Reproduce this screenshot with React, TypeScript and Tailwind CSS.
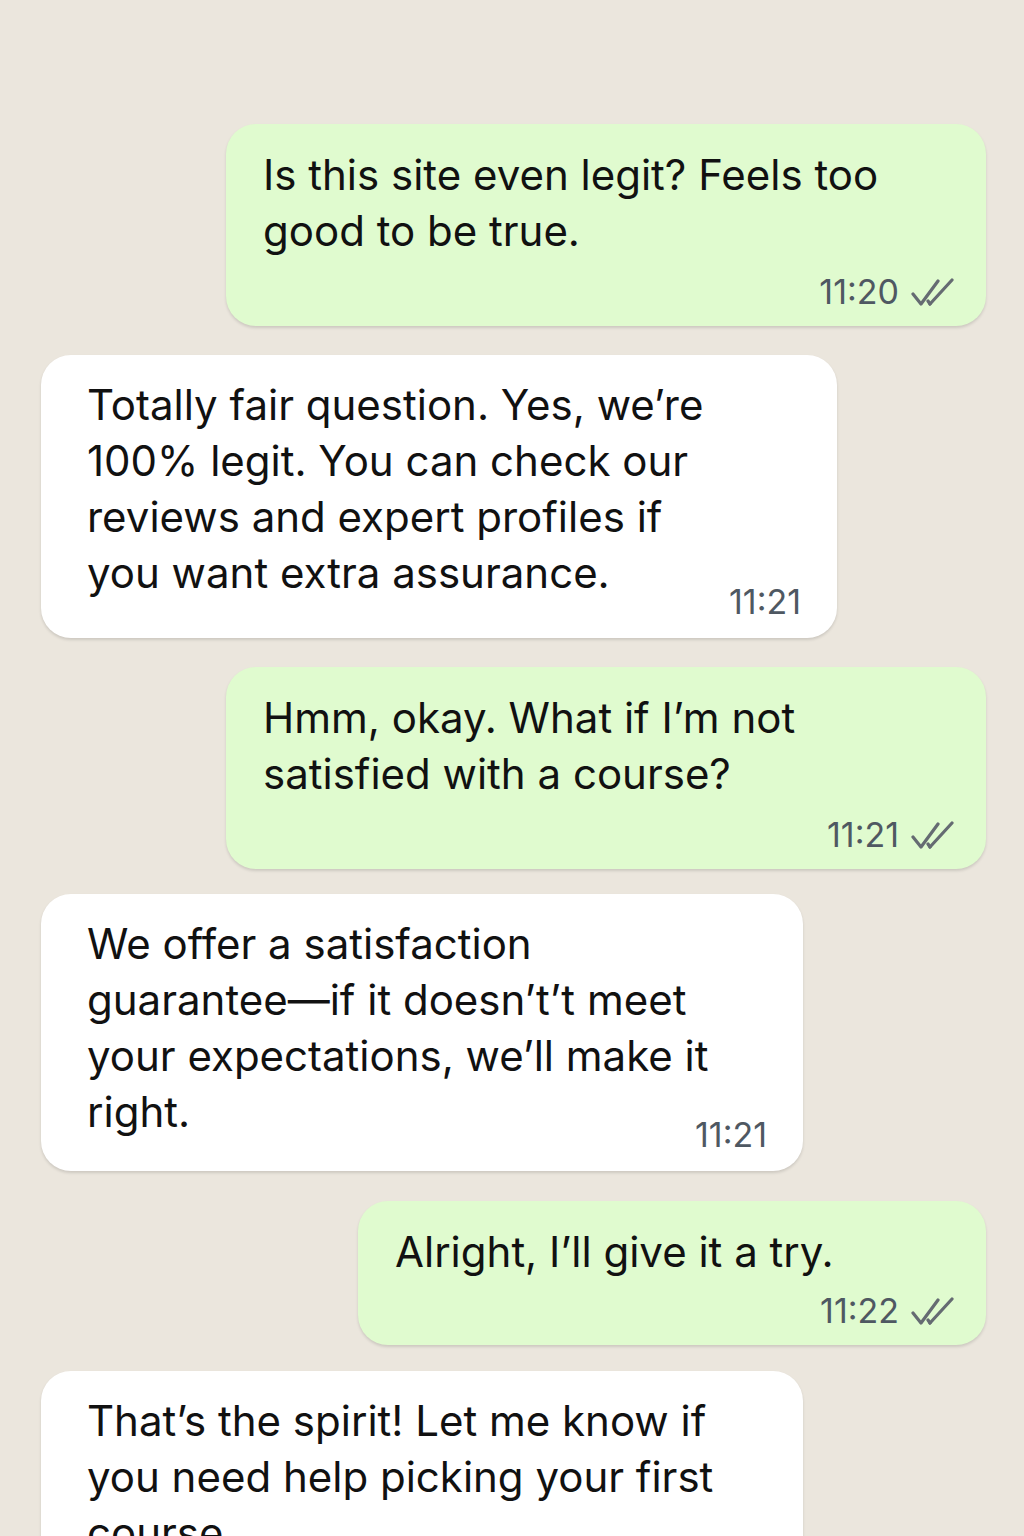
const messages = [
  { out: true, lines: ['Is this site even legit? Feels too', 'good to be true.'], time: '11:20', w: 'w-[760px]', tm: 'mt-[13px]', gap: '' },
  {
    out: false,
    lines: ['Totally fair question. Yes, we’re', '100% legit. You can check our', 'reviews and expert profiles if', 'you want extra assurance.'],
    time: '11:21',
    w: 'w-[796px]',
    tm: '-mt-[19px]',
    gap: 'mt-[29px]',
  },
  { out: true, lines: ['Hmm, okay. What if I’m not', 'satisfied with a course?'], time: '11:21', w: 'w-[760px]', tm: 'mt-[13px]', gap: 'mt-[29px]' },
  {
    out: false,
    lines: ['We offer a satisfaction', 'guarantee—if it doesn’t’t meet', 'your expectations, we’ll make it', 'right.'],
    time: '11:21',
    w: 'w-[762px]',
    tm: '-mt-[25px]',
    gap: 'mt-[25px]',
  },
  { out: true, lines: ['Alright, I’ll give it a try.'], time: '11:22', w: 'w-[628px]', tm: 'mt-[11px]', gap: 'mt-[30px]' },
  {
    out: false,
    lines: ['That’s the spirit! Let me know if', 'you need help picking your first', 'course.'],
    time: '11:22',
    w: 'w-[762px]',
    tm: '-mt-[24px]',
    gap: 'mt-[26px]',
  },
]

function Ticks() {
  return (
    <svg width="44" height="28" viewBox="0 0 44 28" fill="none" className="text-[#656b72]">
      <path d="M2 16 L10 26 L27 3" stroke="currentColor" strokeWidth="3.2" strokeLinecap="round" strokeLinejoin="round" />
      <path d="M19 26 L41 2" stroke="currentColor" strokeWidth="3.2" strokeLinecap="round" />
      <path d="M17 23 L19 26" stroke="currentColor" strokeWidth="3.2" strokeLinecap="round" />
    </svg>
  )
}

export default function App() {
  return (
    <div className="h-[1536px] overflow-hidden bg-[#ebe6dd] pt-[124px] font-['Inter','Liberation_Sans',sans-serif]">
      <div className="flex flex-col">
        {messages.map((m, i) => (
          <div key={i} className={`flex ${m.gap} ${m.out ? 'justify-end pr-[38px]' : 'justify-start pl-[41px]'}`}>
            <div
              className={`${m.w} rounded-[30px] shadow-[0_2px_3px_rgba(0,0,0,0.13)] ${
                m.out ? 'bg-[#e0fbcf] pl-[37px] pr-[31px] pt-[23px] pb-[14px]' : 'bg-white pl-[46px] pr-[36px] pt-[22px] pb-[16px]'
              }`}
            >
              <div className="text-[42px] leading-[56px] text-[#111] whitespace-nowrap">
                {m.lines.map((l, j) => (
                  <div key={j}>{l}</div>
                ))}
              </div>
              {m.out ? (
                <div className={`flex items-center justify-end gap-[12px] ${m.tm} h-[40px]`}>
                  <span className="text-[34px] leading-[40px] text-[#4f5862]">{m.time}</span>
                  <Ticks />
                </div>
              ) : (
                <div className={`flex justify-end ${m.tm} h-[40px]`}>
                  <span className="text-[34px] leading-[40px] text-[#4f5862]">{m.time}</span>
                </div>
              )}
            </div>
          </div>
        ))}
      </div>
    </div>
  )
}
